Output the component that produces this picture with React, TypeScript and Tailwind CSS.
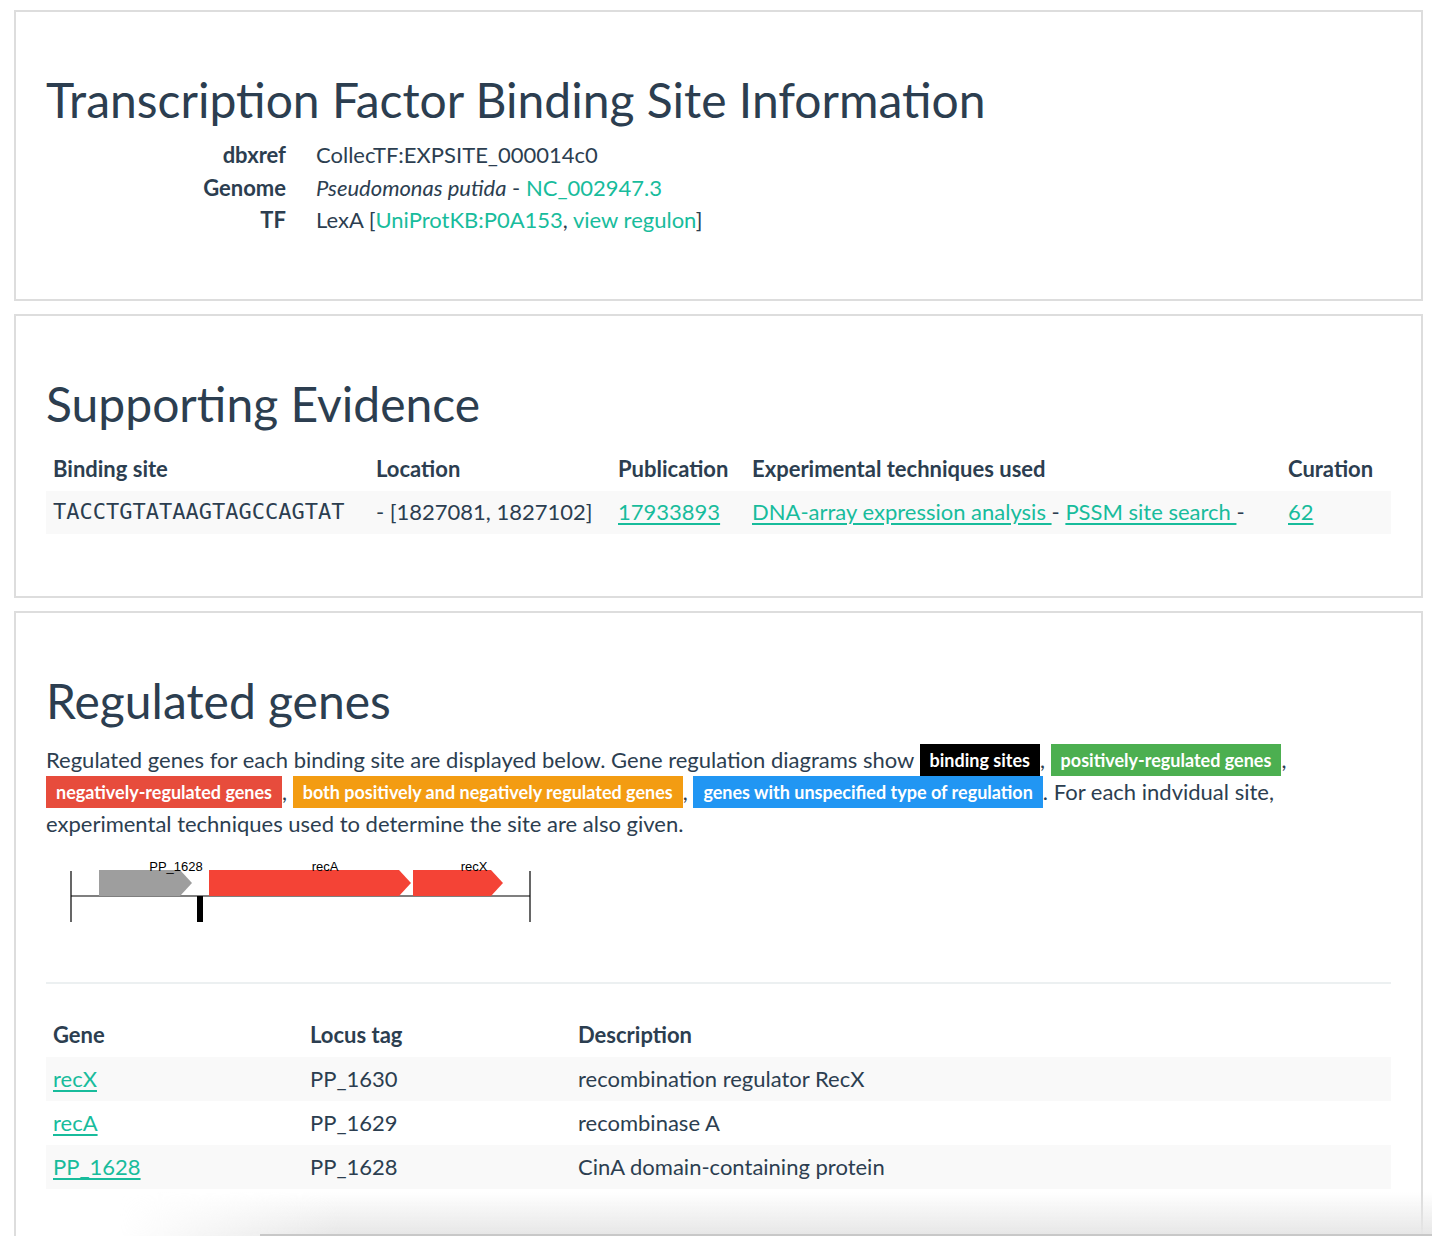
import React from 'react';

const font = { fontFamily: 'Lato, "Open Sans", sans-serif' };

const Panel: React.FC<{ title: string; children: React.ReactNode; last?: boolean }> = ({ title, children, last }) => (
  <div className={`border-2 border-[#dddddd] px-[30px] pt-[61px] ${last ? 'pb-[80px]' : 'pb-[62px]'}`}>
    <h1 className="text-[48px] leading-[53px] font-normal text-[#2c3e50] m-0">{title}</h1>
    {children}
  </div>
);

const Badge: React.FC<{ color: string; children: React.ReactNode }> = ({ color, children }) => (
  <span className={`${color} whitespace-nowrap text-white font-bold text-[18px] px-[10px] py-[5px] align-[1px]`}>{children}</span>
);

const link = 'text-[#18bc9c] underline underline-offset-[3px]';

const regulated = [
  { gene: 'recX', locus: 'PP_1630', desc: 'recombination regulator RecX' },
  { gene: 'recA', locus: 'PP_1629', desc: 'recombinase A' },
  { gene: 'PP_1628', locus: 'PP_1628', desc: 'CinA domain-containing protein' },
];

const GeneDiagram: React.FC = () => (
  <svg width="500" height="80" viewBox="46 850 500 80" className="mt-[9px]">
    <line x1="71" y1="872" x2="71" y2="923" stroke="#000" strokeWidth="1.2" />
    <line x1="530" y1="872" x2="530" y2="923" stroke="#000" strokeWidth="1.2" />
    <line x1="71" y1="897" x2="530" y2="897" stroke="#000" strokeWidth="1.2" />
    <polygon points="99,871 180,871 192,884 180,897 99,897" fill="#9e9e9e" />
    <polygon points="209,871 399,871 411,884 399,897 209,897" fill="#f44336" />
    <polygon points="413,871 491,871 503,884 491,897 413,897" fill="#f44336" />
    <rect x="197" y="897" width="6" height="26" fill="#000" />
    <text x="176" y="872" fontSize="13" textAnchor="middle" fontFamily="Liberation Sans, Arial, sans-serif">PP_1628</text>
    <text x="325" y="872" fontSize="13" textAnchor="middle" fontFamily="Liberation Sans, Arial, sans-serif">recA</text>
    <text x="474" y="872" fontSize="13" textAnchor="middle" fontFamily="Liberation Sans, Arial, sans-serif">recX</text>
  </svg>
);

export default function App() {
  return (
    <div className="relative bg-white text-[#2c3e50] text-[22px] leading-[32px] px-[9px] pt-[10px] h-[1236px] overflow-hidden" style={font}>
      <div className="flex flex-col gap-[13px] ml-[5px]">
        <Panel title="Transcription Factor Binding Site Information">
          <dl className="mt-[13px] mb-0">
            {[
              ['dbxref', <span>CollecTF:EXPSITE_000014c0</span>],
              [
                'Genome',
                <span>
                  <i>Pseudomonas putida</i> - <a className="text-[#18bc9c]">NC_002947.3</a>
                </span>,
              ],
              [
                'TF',
                <span>
                  LexA [<a className="text-[#18bc9c]">UniProtKB:P0A153</a>, <a className="text-[#18bc9c]">view regulon</a>]
                </span>,
              ],
            ].map(([k, v], i) => (
              <div key={i} className="flex leading-[32.5px]">
                <dt className="w-[240px] text-right font-bold">{k}</dt>
                <dd className="ml-[30px]">{v}</dd>
              </div>
            ))}
          </dl>
        </Panel>

        <Panel title="Supporting Evidence">
          <table className="mt-[18px] w-full table-fixed border-collapse">
            <thead>
              <tr className="text-left">
                <th className="w-[323px] px-[7px] py-[5.5px] font-bold">Binding site</th>
                <th className="w-[242px] px-[7px] py-[5.5px] font-bold">Location</th>
                <th className="w-[134px] px-[7px] py-[5.5px] font-bold">Publication</th>
                <th className="w-[536px] px-[7px] py-[5.5px] font-bold">Experimental techniques used</th>
                <th className="px-[7px] py-[5.5px] font-bold">Curation</th>
              </tr>
            </thead>
            <tbody>
              <tr className="bg-[#f9f9f9]">
                <td className="px-[7px] py-[5.5px] text-[22px]" style={{ fontFamily: '"DejaVu Sans Mono", monospace' }}>
                  TACCTGTATAAGTAGCCAGTAT
                </td>
                <td className="px-[7px] py-[5.5px]">- [1827081, 1827102]</td>
                <td className="px-[7px] py-[5.5px]">
                  <a className={link}>17933893</a>
                </td>
                <td className="px-[7px] py-[5.5px] whitespace-nowrap">
                  <a className={link}>DNA-array expression analysis </a> - <a className={link}>PSSM site search </a> -
                </td>
                <td className="px-[7px] py-[5.5px]">
                  <a className={link}>62</a>
                </td>
              </tr>
            </tbody>
          </table>
        </Panel>

        <Panel title="Regulated genes" last>
          <p className="mt-[17px]">
            Regulated genes for each binding site are displayed below. Gene regulation diagrams show{' '}
            <Badge color="bg-black">binding sites</Badge>, <Badge color="bg-[#4caf50]">positively-regulated genes</Badge>,{' '}
            <Badge color="bg-[#e74c3c]">negatively-regulated genes</Badge>,{' '}
            <Badge color="bg-[#f39c12]">both positively and negatively regulated genes</Badge>,{' '}
            <Badge color="bg-[#2196f3]">genes with unspecified type of regulation</Badge>. For each indvidual site,
            experimental techniques used to determine the site are also given.
          </p>
          <GeneDiagram />
          <div className="mt-[53px] h-[2px] bg-[#ecf0f1]" />
          <table className="mt-[29px] w-full table-fixed border-collapse">
            <thead>
              <tr className="text-left">
                <th className="w-[257px] px-[7px] py-[6px] font-bold">Gene</th>
                <th className="w-[268px] px-[7px] py-[6px] font-bold">Locus tag</th>
                <th className="px-[7px] py-[6px] font-bold">Description</th>
              </tr>
            </thead>
            <tbody>
              {regulated.map((r, i) => (
                <tr key={r.gene} className={i % 2 === 0 ? 'bg-[#f9f9f9]' : ''}>
                  <td className="px-[7px] py-[6px]">
                    <a className={link}>{r.gene}</a>
                  </td>
                  <td className="px-[7px] py-[6px]">{r.locus}</td>
                  <td className="px-[7px] py-[6px]">{r.desc}</td>
                </tr>
              ))}
            </tbody>
          </table>
        </Panel>
      </div>
      <div className="pointer-events-none absolute left-[120px] right-0 top-[1192px] h-[44px] bg-gradient-to-b from-transparent to-[#e6e6e6] [mask-image:linear-gradient(to_right,transparent,black_220px)]" />
      <div className="pointer-events-none absolute left-[260px] right-0 top-[1234px] h-[2px] bg-[#c8c8c8]" />
    </div>
  );
}
